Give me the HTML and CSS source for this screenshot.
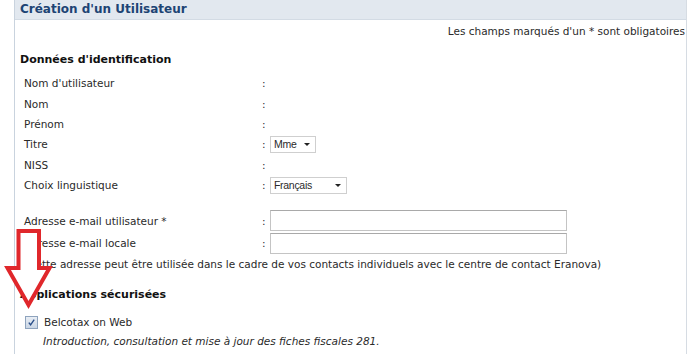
FILE: index.html
```html
<!DOCTYPE html>
<html lang="fr">
<head>
  <meta charset="UTF-8" />
  <title>Création d'un Utilisateur</title>
  <link rel="stylesheet" href="styles.css">
</head>
<body>
  <div class="panel">
    <div class="panel-head">Création d'un Utilisateur</div>
    <div class="panel-body">
      <div class="required-note">Les champs marqués d'un * sont obligatoires</div>

      <h2>Données d'identification</h2>
      <div class="form-grid">
        <span class="lbl">Nom d'utilisateur</span><span class="colon">:</span><span></span>
        <span class="lbl">Nom</span><span class="colon">:</span><span></span>
        <span class="lbl">Prénom</span><span class="colon">:</span><span></span>
        <span class="lbl">Titre</span><span class="colon">:</span>
        <span><span class="select sel-title">Mme <i class="caret"></i></span></span>
        <span class="lbl">NISS</span><span class="colon">:</span><span></span>
        <span class="lbl">Choix linguistique</span><span class="colon">:</span>
        <span><span class="select sel-lang">Français <i class="caret"></i></span></span>
      </div>

      <div class="form-grid mail-grid">
        <span class="lbl">Adresse e-mail utilisateur *</span><span class="colon">:</span>
        <span><input class="text-input" type="text"></span>
        <span class="lbl">Adresse e-mail locale</span><span class="colon">:</span>
        <span><input class="text-input" type="text"></span>
      </div>
      <div class="hint">(Cette adresse peut être utilisée dans le cadre de vos contacts individuels avec le centre de contact Eranova)</div>

      <h2 class="apps-title">Applications sécurisées</h2>
      <div class="app-row">
        <span class="check">
          <svg width="11" height="11" viewBox="0 0 11 11"><path d="M2.8 5.6 L4.6 7.8 L8.2 2.6" fill="none" stroke="#2a4f8a" stroke-width="1.4"/></svg>
        </span>
        <span>Belcotax on Web</span>
      </div>
      <div class="app-desc">Introduction, consultation et mise à jour des fiches fiscales 281.</div>
    </div>
  </div>

  <!-- red annotation arrow -->
  <svg class="arrow" width="56" height="88" viewBox="0 0 56 88">
    <path d="M19.5 4 H40 V41 H50.5 L29.5 78 L8.5 41 H19.5 Z" fill="#fff" stroke="#e0272b" stroke-width="4"/>
  </svg>
</body>
</html>
```

FILE: styles.css
```css
body {
  margin: 0;
  background: #fff;
  font-family: Tahoma, "DejaVu Sans", sans-serif;
  font-size: 10.5px;
  color: #2a2a2a;
  position: relative;
  width: 700px;
  height: 354px;
  overflow: hidden;
}

.panel {
  margin-left: 14px;
  width: 671px;
  border-left: 1px solid #c9d3de;
  border-right: 1px solid #d6dce3;
  height: 354px;
}
.panel-head {
  background: #e2e8ef;
  color: #1d4474;
  font-weight: bold;
  font-size: 12px;
  height: 20px;
  line-height: 19px;
  padding-left: 5px;
  border-bottom: 1px solid #d3dbe4;
  box-sizing: border-box;
}
.panel-body { padding: 0 0 0 5px; }

.required-note {
  text-align: right;
  padding: 3px 1px 0 0;
  height: 18px;
  line-height: 16px;
}

h2 {
  font-size: 11px;
  font-weight: bold;
  margin: 0;
  padding-top: 11px;
  height: 21px;
  line-height: 16px;
  color: #111;
}

.form-grid {
  display: grid;
  grid-template-columns: 238px 8px 1fr;
  grid-auto-rows: 20.4px;
  align-items: center;
  padding-left: 4px;
}
.colon { text-align: left; }

.select {
  display: inline-flex;
  align-items: center;
  justify-content: space-between;
  height: 17px;
  border: 1px solid #cfcfcf;
  box-sizing: border-box;
  padding: 0 5px 0 3px;
  font-family: "Liberation Sans", Arial, sans-serif;
  font-size: 10.5px;
  letter-spacing: -0.3px;
  background: #fff;
}
.sel-title { width: 46px; }
.sel-lang { width: 77px; }
.caret {
  width: 0; height: 0;
  border-left: 3.5px solid transparent;
  border-right: 3.5px solid transparent;
  border-top: 3.5px solid #222;
}

.mail-grid {
  margin-top: 14px;
  grid-auto-rows: 22.5px;
}
.text-input {
  display: block;
  width: 297px;
  height: 21px;
  box-sizing: border-box;
  border: 1px solid #c4c4c4;
  border-top-color: #a9a9a9;
  margin: 0;
  padding: 0;
  background: #fff;
}
.hint {
  padding: 3px 0 0 4px;
  height: 17px;
  line-height: 15px;
}

.apps-title { padding-top: 13px; height: 19px; }

.app-row {
  display: flex;
  align-items: center;
  gap: 6px;
  padding-left: 5px;
  height: 20px;
  margin-top: 6px;
}
.check {
  width: 11px; height: 11px;
  border: 1px solid #8ea3bd;
  background: linear-gradient(#e9eef5, #c9d5e4);
  display: inline-flex;
  align-items: center;
  justify-content: center;
}
.app-desc {
  font-style: italic;
  padding-left: 23px;
  height: 19px;
  line-height: 19px;
}

.arrow {
  position: absolute;
  left: -1px;
  top: 227px;
}
```
